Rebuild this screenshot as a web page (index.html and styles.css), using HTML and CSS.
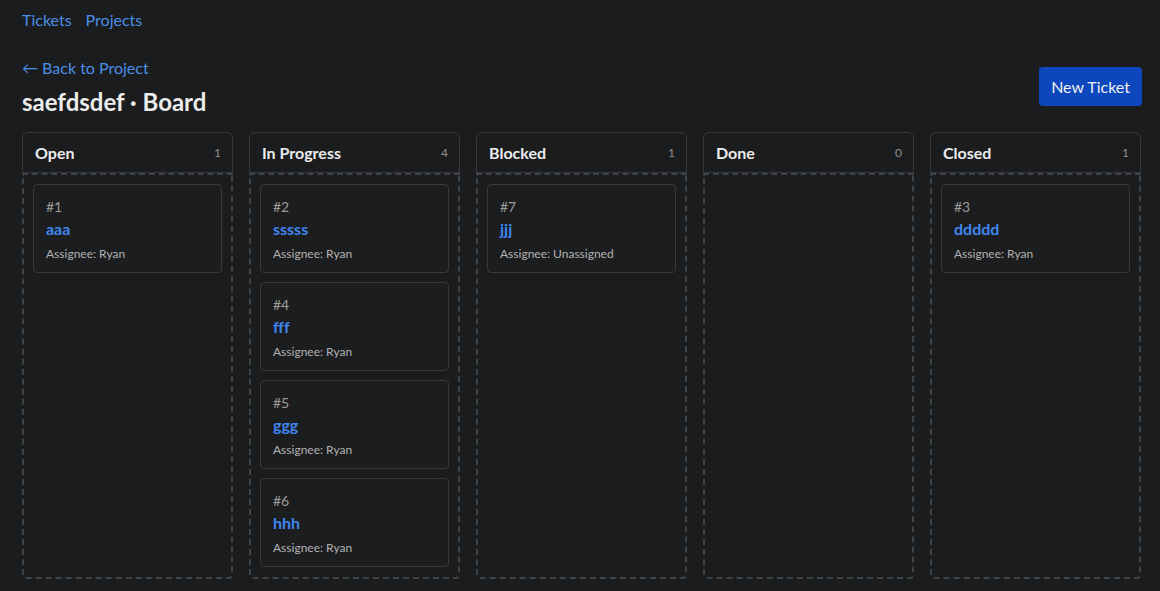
FILE: index.html
```html
<!DOCTYPE html>
<html>
<head>
<meta charset="utf-8">
<link rel="stylesheet" href="styles.css">
</head>
<body>
<nav class="nav">
  <a href="#" class="nav-link">Tickets</a>
  <a href="#" class="nav-link">Projects</a>
</nav>
<main class="page">
  <div class="page-head">
    <div class="head-text">
      <a href="#" class="back">← Back to Project</a>
      <h1 class="title">saefdsdef · Board</h1>
    </div>
    <button class="btn">New Ticket</button>
  </div>
  <div class="board">
    <section class="col">
      <header class="col-head"><span class="col-name">Open</span><span class="col-count">1</span></header>
      <div class="col-body">
        <div class="card"><div class="card-id">#1</div><a href="#" class="card-title">aaa</a><div class="card-meta">Assignee: Ryan</div></div>
      </div>
    </section>
    <section class="col">
      <header class="col-head"><span class="col-name">In Progress</span><span class="col-count">4</span></header>
      <div class="col-body">
        <div class="card"><div class="card-id">#2</div><a href="#" class="card-title">sssss</a><div class="card-meta">Assignee: Ryan</div></div>
        <div class="card"><div class="card-id">#4</div><a href="#" class="card-title">fff</a><div class="card-meta">Assignee: Ryan</div></div>
        <div class="card"><div class="card-id">#5</div><a href="#" class="card-title">ggg</a><div class="card-meta">Assignee: Ryan</div></div>
        <div class="card"><div class="card-id">#6</div><a href="#" class="card-title">hhh</a><div class="card-meta">Assignee: Ryan</div></div>
      </div>
    </section>
    <section class="col">
      <header class="col-head"><span class="col-name">Blocked</span><span class="col-count">1</span></header>
      <div class="col-body">
        <div class="card"><div class="card-id">#7</div><a href="#" class="card-title">jjj</a><div class="card-meta">Assignee: Unassigned</div></div>
      </div>
    </section>
    <section class="col">
      <header class="col-head"><span class="col-name">Done</span><span class="col-count">0</span></header>
      <div class="col-body"></div>
    </section>
    <section class="col">
      <header class="col-head"><span class="col-name">Closed</span><span class="col-count">1</span></header>
      <div class="col-body">
        <div class="card"><div class="card-id">#3</div><a href="#" class="card-title">ddddd</a><div class="card-meta">Assignee: Ryan</div></div>
      </div>
    </section>
  </div>
</main>
</body>
</html>
```

FILE: styles.css
```css
* { box-sizing: border-box; }
html, body { margin: 0; padding: 0; }
body {
  background: #1b1c1e;
  color: #e6e6e6;
  font-family: Lato, "Noto Sans", sans-serif;
  font-size: 16px;
  height: 591px;
  overflow: hidden;
}
a { text-decoration: none; }
.nav {
  display: flex;
  gap: 14px;
  padding: 8px 22px 0 22px;
  height: 32px;
  line-height: 24px;
}
.nav-link { color: #4a8fe6; font-size: 16px; }
.page { padding: 0 18px 0 22px; }
.page-head {
  display: flex;
  justify-content: space-between;
  align-items: center;
  padding-top: 24px;
}
.head-text { display: flex; flex-direction: column; }
.back { color: #4a8fe6; font-size: 16px; line-height: 24px; }
.title {
  margin: 7px 0 0 0;
  font-size: 24px;
  line-height: 30px;
  font-weight: 700;
  color: #ececec;
}
.btn {
  background: #0d47bd;
  color: #f0f0f0;
  border: none;
  border-radius: 4px;
  font-family: inherit;
  font-size: 16px;
  height: 39px;
  padding: 0 12px;
  margin-top: 0;
}
.board {
  display: grid;
  grid-template-columns: repeat(5, 1fr);
  gap: 16px;
  margin-top: 15px;
  padding-right: 1px;
}
.col { display: flex; flex-direction: column; }
.col-head {
  display: flex;
  justify-content: space-between;
  align-items: center;
  height: 41px;
  padding: 0 11px 0 12px;
  border: 1px solid #38393c;
  border-radius: 6px 6px 0 0;
}
.col-name { font-weight: 700; font-size: 16px; color: #ececec; }
.col-count { font-size: 12px; color: #909090; }
.col-body {
  border: 2px dashed #3d4346;
  border-radius: 0 0 4px 4px;
  height: 406px;
  padding: 9px 9px;
  display: flex;
  flex-direction: column;
  gap: 9px;
}
.card {
  border: 1px solid #38393c;
  border-radius: 4px;
  background: #1c1d1f;
  height: 89px;
  padding: 12px 12px 0 12px;
}
.card-id { font-size: 14px; color: #9d9d9d; line-height: 20px; }
.card-title { display: block; color: #3f86f0; font-weight: 700; font-size: 16px; line-height: 24px; }
.card-meta { font-size: 12px; color: #b2b2b2; line-height: 26px; }
```
